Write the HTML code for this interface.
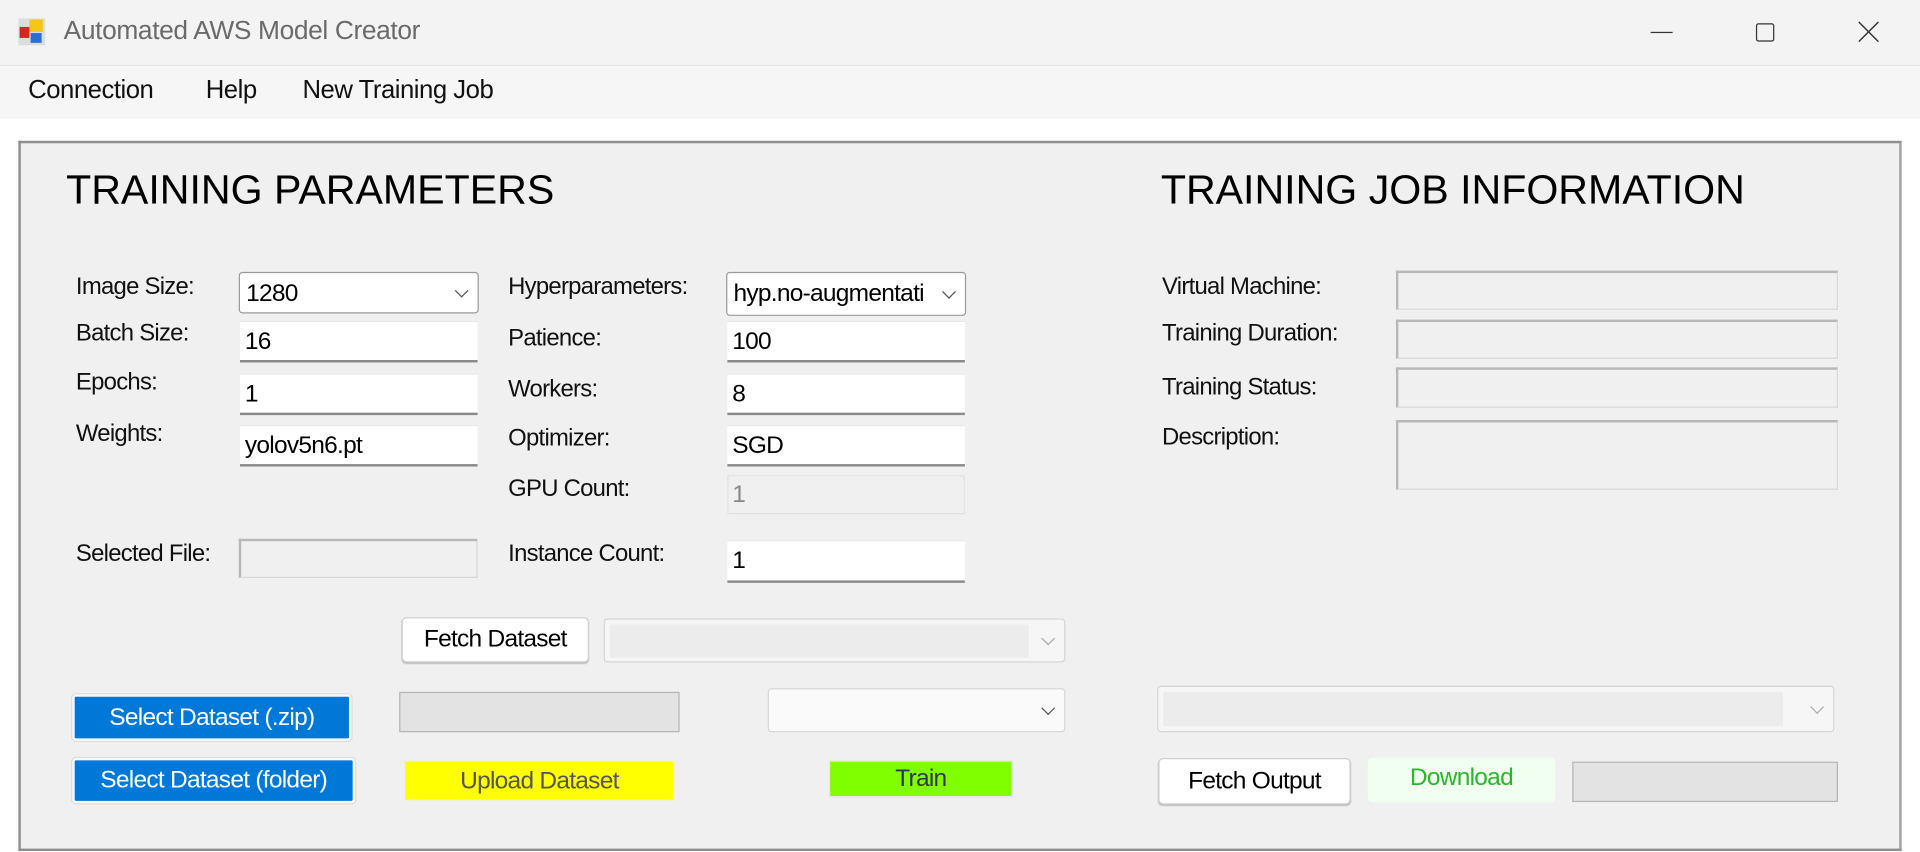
<!DOCTYPE html>
<html><head><meta charset="utf-8"><style>
*{box-sizing:border-box;margin:0;padding:0}
html,body{width:1920px;height:852px;overflow:hidden;background:#fff;font-family:"Liberation Sans",sans-serif}
#w{position:absolute;left:0;top:0;width:1568px;height:696px;transform:scale(1.2245);transform-origin:0 0;background:#fff}
.a{position:absolute}
.lbl{position:absolute;font-size:19.5px;color:#111;letter-spacing:-0.6px;line-height:22px;white-space:nowrap}
.in{position:absolute;background:#fff;border-bottom:2px solid #8a8a8a;border-top:1px solid #e8e8e8;font-size:20px;padding-left:4px;color:#000;letter-spacing:-0.6px;white-space:nowrap}
.cb{position:absolute;background:#fff;border:1px solid #9a9a9a;border-radius:3px;font-size:20px;padding-left:5px;color:#000;letter-spacing:-0.6px;white-space:nowrap}
.chev{position:absolute;right:9px;top:50%;width:8px;height:8px;border-right:1px solid #555;border-bottom:1px solid #555;transform:translateY(-70%) rotate(45deg)}
.dis{position:absolute;background:#f0f0f0;border:1px solid #d8d8d8;border-top:2px solid #b8b8b8;border-left:2px solid #b8b8b8}
.btn{position:absolute;text-align:center;font-size:20px;letter-spacing:-0.6px;white-space:nowrap}
h1{position:absolute;font-weight:normal;font-size:33.6px;color:#000;line-height:36px;white-space:nowrap}
</style></head><body><div id="w">
<div class="a" style="left:0;top:0;width:1568px;height:54px;background:#f3f3f3;border-bottom:1px solid #e3e3e3"></div>
<svg class="a" style="left:14px;top:14px" width="24" height="24" viewBox="0 0 24 24"><rect x="1" y="1" width="22" height="22" fill="#ddd"/><rect x="10" y="2" width="11" height="10" fill="#f5c518"/><rect x="2" y="8" width="8" height="9" fill="#d22"/><rect x="11" y="13" width="9" height="8" fill="#2a6fd6"/></svg>
<div class="a" style="left:52px;top:13px;font-size:21.5px;color:#6a6a6a;letter-spacing:-0.3px">Automated AWS Model Creator</div>
<div class="a" style="left:1348px;top:26px;width:18px;height:1px;background:#333"></div>
<div class="a" style="left:1434px;top:19px;width:15px;height:15px;border:1px solid #333;border-radius:2px"></div>
<svg class="a" style="left:1517px;top:17px" width="18" height="18"><path d="M1 1L17 17M17 1L1 17" stroke="#333" stroke-width="1.2"/></svg>
<div class="a" style="left:0;top:55px;width:1568px;height:42px;background:#f6f6f6"></div>
<div class="a" style="left:23px;top:62px;font-size:21px;color:#111;letter-spacing:-0.4px">Connection</div>
<div class="a" style="left:168px;top:62px;font-size:21px;color:#111;letter-spacing:-0.4px">Help</div>
<div class="a" style="left:247px;top:62px;font-size:21px;color:#111;letter-spacing:-0.4px">New Training Job</div>
<div class="a" style="left:15px;top:115px;width:1538px;height:580px;background:#f0f0f0;border:2px solid #8f8f8f;border-right-color:#a0a0a0"></div>
<h1 style="left:54px;top:138px">TRAINING PARAMETERS</h1>
<h1 style="left:948px;top:138px">TRAINING JOB INFORMATION</h1>

<div class="lbl" style="left:62px;top:223px">Image Size:</div>
<div class="lbl" style="left:62px;top:261px">Batch Size:</div>
<div class="lbl" style="left:62px;top:301px">Epochs:</div>
<div class="lbl" style="left:62px;top:343px">Weights:</div>
<div class="lbl" style="left:62px;top:441px">Selected File:</div>

<div class="cb" style="left:195px;top:222px;width:196px;height:34px;line-height:34px">1280<span class="chev"></span></div>
<div class="in" style="left:196px;top:262px;width:194px;height:34px;line-height:32px">16</div>
<div class="in" style="left:196px;top:305px;width:194px;height:34px;line-height:32px">1</div>
<div class="in" style="left:196px;top:347px;width:194px;height:34px;line-height:32px">yolov5n6.pt</div>
<div class="dis" style="left:195px;top:440px;width:195px;height:32px"></div>

<div class="lbl" style="left:415px;top:223px">Hyperparameters:</div>
<div class="lbl" style="left:415px;top:265px">Patience:</div>
<div class="lbl" style="left:415px;top:307px">Workers:</div>
<div class="lbl" style="left:415px;top:347px">Optimizer:</div>
<div class="lbl" style="left:415px;top:388px">GPU Count:</div>
<div class="lbl" style="left:415px;top:441px">Instance Count:</div>

<div class="cb" style="left:593px;top:222px;width:196px;height:36px;line-height:34px;overflow:hidden;padding-right:28px">hyp.no-augmentati<span class="chev"></span></div>
<div class="in" style="left:594px;top:262px;width:194px;height:34px;line-height:32px">100</div>
<div class="in" style="left:594px;top:305px;width:194px;height:34px;line-height:32px">8</div>
<div class="in" style="left:594px;top:347px;width:194px;height:34px;line-height:32px">SGD</div>
<div class="a" style="left:594px;top:388px;width:194px;height:32px;background:#f0f0f0;border:1px solid #e2e2e2;font-size:20px;color:#888;padding-left:3px;line-height:30px">1</div>
<div class="in" style="left:594px;top:441px;width:194px;height:35px;line-height:33px">1</div>

<div class="btn" style="left:328px;top:504px;width:153px;height:37px;line-height:35px;background:#fff;border:1px solid #d0d0d0;border-radius:4px;box-shadow:0 1px 1px #bbb">Fetch Dataset</div>
<div class="a" style="left:493px;top:505px;width:377px;height:36px;background:#f6f6f6;border:1px solid #d5d5d5;border-radius:3px"><div class="a" style="left:4px;top:4px;width:342px;height:27px;background:#ececec"></div><span class="chev" style="border-color:#aaa"></span></div>

<div class="btn" style="left:58px;top:566px;width:230px;height:40px;border:1px solid #ddd;border-radius:4px;background:#f8f8f8;padding:2px"><div style="background:#0078d7;color:#fff;height:34px;line-height:34px;border-radius:1px">Select Dataset (.zip)</div></div>
<div class="btn" style="left:58px;top:618px;width:233px;height:39px;border:1px solid #ddd;border-radius:4px;background:#f8f8f8;padding:2px"><div style="background:#0078d7;color:#fff;height:33px;line-height:33px;border-radius:1px">Select Dataset (folder)</div></div>
<div class="a" style="left:326px;top:565px;width:229px;height:33px;background:#e3e3e3;border:1px solid #b5b5b5"></div>
<div class="a" style="left:627px;top:562px;width:243px;height:36px;background:#fafafa;border:1px solid #d8d8d8;border-radius:3px"><span class="chev"></span></div>
<div class="btn" style="left:330px;top:621px;width:221px;height:33px;line-height:33px;background:#ffff00;color:#555;border:1px solid #eee">Upload Dataset</div>
<div class="btn" style="left:677px;top:621px;width:150px;height:30px;line-height:29px;background:#80ff00;color:#335;border:1px solid #e8e8e8">Train</div>

<div class="lbl" style="left:949px;top:223px">Virtual Machine:</div>
<div class="lbl" style="left:949px;top:261px">Training Duration:</div>
<div class="lbl" style="left:949px;top:305px">Training Status:</div>
<div class="lbl" style="left:949px;top:346px">Description:</div>
<div class="dis" style="left:1140px;top:221px;width:361px;height:32px"></div>
<div class="dis" style="left:1140px;top:261px;width:361px;height:32px"></div>
<div class="dis" style="left:1140px;top:300px;width:361px;height:33px"></div>
<div class="dis" style="left:1140px;top:343px;width:361px;height:57px"></div>

<div class="a" style="left:945px;top:560px;width:553px;height:38px;background:#f6f6f6;border:1px solid #d5d5d5;border-radius:3px"><div class="a" style="left:4px;top:4px;width:506px;height:28px;background:#ececec"></div><span class="chev" style="border-color:#aaa"></span></div>
<div class="btn" style="left:946px;top:619px;width:157px;height:38px;line-height:36px;background:#fff;border:1px solid #d0d0d0;border-radius:4px;box-shadow:0 1px 1px #bbb">Fetch Output</div>
<div class="btn" style="left:1117px;top:619px;width:153px;height:36px;line-height:33px;background:#f0fff0;color:#2db52d;border-radius:3px">Download</div>
<div class="a" style="left:1284px;top:622px;width:217px;height:33px;background:#e3e3e3;border:1px solid #b5b5b5"></div>
</div></body></html>
